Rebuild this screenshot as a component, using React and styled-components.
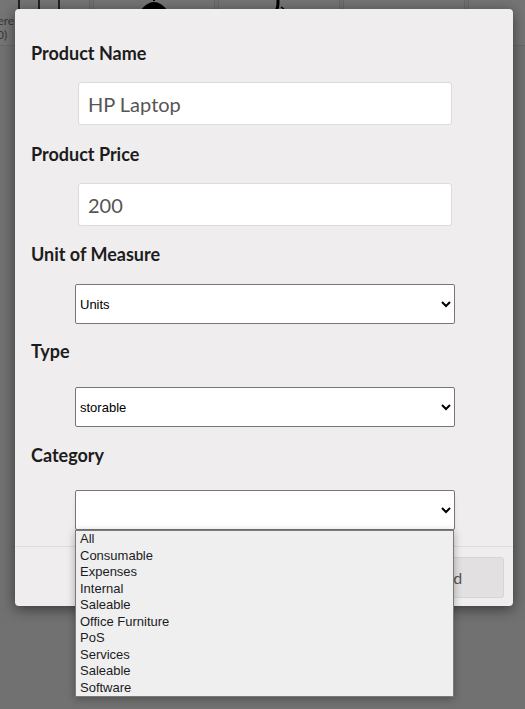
import React from "react";
import styled, { createGlobalStyle } from "styled-components";

const GlobalStyle = createGlobalStyle`
  html, body { margin: 0; padding: 0; }
  body { font-family: Lato, "Open Sans", sans-serif; background: #ffffff; }
  * { box-sizing: border-box; }
`;

const Page = styled.div`
  position: relative;
  width: 525px;
  height: 709px;
  overflow: hidden;
  background: #f7f7f7;
`;

const Board = styled.div`
  display: flex;
  gap: 3px;
  margin-left: -32px;
  margin-top: -116px;
`;

const Card = styled.div`
  flex: 0 0 122px;
  height: 162px;
  display: flex;
  flex-direction: column;
  background: #ffffff;
  border: 1px solid #e2e2e2;
`;

const CardImage = styled.svg`
  display: block;
  width: 120px;
  height: 129px;
`;

const Caption = styled.div`
  padding-left: 11px;
  font-family: Lato, sans-serif;
  font-size: 12px;
  line-height: 14px;
  color: #7c7c7c;
  white-space: nowrap;
`;

const Overlay = styled.div`
  position: absolute;
  inset: 0;
  background: rgba(0, 0, 0, 0.54);
  padding: 9px 0 0 15px;
  z-index: 10;
`;

const Modal = styled.div`
  width: 498px;
  background: #efedee;
  border-radius: 4px;
  box-shadow: 0 3px 14px rgba(0, 0, 0, 0.5);
`;

const Body = styled.div`
  padding: 16px 16px 16px;
`;

const Field = styled.div`
  margin-top: ${(p) => p.$top}px;
  display: flex;
  flex-direction: column;
  gap: ${(p) => p.$gap}px;
`;

const Label = styled.label`
  display: block;
  font-family: Lato, sans-serif;
  font-weight: 700;
  font-size: 18px;
  line-height: 22px;
  color: #1c1c1c;
`;

const TextInput = styled.input`
  display: block;
  width: 374px;
  height: 43px;
  margin-left: 47px;
  padding: 0 9px;
  border: 1px solid #dcdadb;
  border-radius: 3px;
  background: #ffffff;
  font-family: Lato, sans-serif;
  font-size: 20px;
  color: #555555;
  outline: none;
`;

const SelectWrap = styled.div`
  position: relative;
  margin-left: 44px;
  width: 380px;
`;

const Select = styled.select`
  display: block;
  width: 380px;
  height: 40px;
  font-family: "Liberation Sans", Arial, sans-serif;
  font-size: 13px;
  color: #000000;
  background-color: #ffffff;
  border: 1px solid #767676;
  border-radius: 2px;
  box-shadow: ${(p) => (p.$open ? "0 4px 6px -3px rgba(0,0,0,0.25)" : "none")};
`;

const OptionList = styled.ul`
  position: absolute;
  top: 40px;
  left: 0;
  width: 379px;
  margin: 0;
  padding: 0;
  list-style: none;
  background: #efefef;
  border: 1px solid #7a7a7a;
  box-shadow: 0 2px 8px rgba(0, 0, 0, 0.3);
  z-index: 20;
`;

const OptionItem = styled.li`
  height: 16.5px;
  padding-left: 4px;
  font-family: "Liberation Sans", Arial, sans-serif;
  font-size: 13px;
  line-height: 16.5px;
  color: #1b1b24;
  white-space: nowrap;
`;

const Footer = styled.div`
  display: flex;
  justify-content: flex-end;
  padding: 10px 9px 8px;
  border-top: 1px solid #dddbdc;
`;

const Button = styled.button`
  width: 112px;
  height: 41px;
  border: 1px solid #d6d4d5;
  border-radius: 3px;
  background: #e2e0e1;
  font-family: Lato, sans-serif;
  font-size: 16px;
  color: #555555;
`;

const categories = [
  "All",
  "Consumable",
  "Expenses",
  "Internal",
  "Saleable",
  "Office Furniture",
  "PoS",
  "Services",
  "Saleable",
  "Software",
];

export default function App() {
  return (
    <>
      <GlobalStyle />
      <Page>
        <Board>
          <Card>
            <CardImage viewBox="0 0 120 129">
              <rect x="30" y="40" width="70" height="40" fill="#555" />
              <line x1="50" y1="78" x2="50" y2="124" stroke="#111" strokeWidth="1.5" />
              <line x1="70" y1="78" x2="70" y2="124" stroke="#111" strokeWidth="1.5" />
              <line x1="90" y1="78" x2="90" y2="124" stroke="#111" strokeWidth="1.5" />
            </CardImage>
            <Caption>
              Reference
              <br />
              {"(100)"}
            </Caption>
          </Card>
          <Card>
            <CardImage viewBox="0 0 120 129">
              <line x1="60" y1="40" x2="60" y2="116" stroke="#000" strokeWidth="2" />
              <path d="M46 126 Q60 108 74 126 Z" fill="#000" />
            </CardImage>
          </Card>
          <Card>
            <CardImage viewBox="0 0 120 129">
              <path d="M59 60 L59 118 Q59 127 54 126" stroke="#000" strokeWidth="3" fill="none" />
              <path d="M62 122 L65 124" stroke="#000" strokeWidth="1.5" fill="none" />
            </CardImage>
          </Card>
          <Card />
          <Card />
        </Board>
        <Overlay>
          <Modal>
            <Body>
              <Field $top={17} $gap={18}>
                <Label>Product Name</Label>
                <TextInput defaultValue="HP Laptop" />
              </Field>
              <Field $top={18} $gap={18}>
                <Label>Product Price</Label>
                <TextInput defaultValue="200" />
              </Field>
              <Field $top={17} $gap={19}>
                <Label>Unit of Measure</Label>
                <SelectWrap>
                  <Select defaultValue="Units">
                    <option>Units</option>
                  </Select>
                </SelectWrap>
              </Field>
              <Field $top={16} $gap={25}>
                <Label>Type</Label>
                <SelectWrap>
                  <Select defaultValue="storable">
                    <option>storable</option>
                  </Select>
                </SelectWrap>
              </Field>
              <Field $top={17} $gap={24}>
                <Label>Category</Label>
                <SelectWrap>
                  <Select $open defaultValue="">
                    <option value=""></option>
                  </Select>
                  <OptionList>
                    {categories.map((c, i) => (
                      <OptionItem key={i}>{c}</OptionItem>
                    ))}
                  </OptionList>
                </SelectWrap>
              </Field>
            </Body>
            <Footer>
              <Button>Add</Button>
            </Footer>
          </Modal>
        </Overlay>
      </Page>
    </>
  );
}
